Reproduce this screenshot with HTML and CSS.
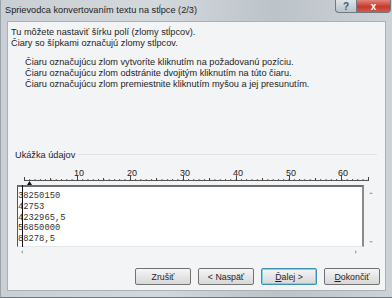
FILE: index.html
```html
<!DOCTYPE html>
<html lang="sk">
<head>
    <meta charset="UTF-8">
    <title>Sprievodca konvertovaním textu na stĺpce</title>
    <link rel="stylesheet" href="styles.css">
</head>
<body>
    <div class="window">
        <!-- Title bar -->
        <div class="titlebar">
            <span class="title">Sprievodca konvertovaním textu na stĺpce (2/3)</span>
            <div class="caption-btns">
                <span class="cap-help">?</span>
                <span class="cap-close">x</span>
            </div>
        </div>

        <!-- Dialog body -->
        <div class="client">
            <div class="intro">
                <p>Tu môžete nastaviť šírku polí (zlomy stĺpcov).</p>
                <p>Čiary so šípkami označujú zlomy stĺpcov.</p>
            </div>
            <div class="hints">
                <p>Čiaru označujúcu zlom vytvoríte kliknutím na požadovanú pozíciu.</p>
                <p>Čiaru označujúcu zlom odstránite dvojitým kliknutím na túto čiaru.</p>
                <p>Čiaru označujúcu zlom premiestnite kliknutím myšou a jej presunutím.</p>
            </div>

            <div class="group-head">
                <span>Ukážka údajov</span>
                <div class="group-line"></div>
            </div>

            <div class="preview">
                <svg class="ruler" width="360" height="20" viewBox="0 0 360 20">
                    <defs>
                        <pattern id="minor" x="11" y="0" width="5.29" height="20" patternUnits="userSpaceOnUse">
                            <rect x="0" y="14" width="1" height="1" fill="#555"/>
                        </pattern>
                    </defs>
                    <rect x="11" y="0" width="345" height="20" fill="url(#minor)"/>
                    <line x1="11" y1="15.5" x2="356" y2="15.5" stroke="#555" stroke-width="1"/>
                    <g stroke="#444" stroke-width="1">
                        <line x1="11.5" y1="12" x2="11.5" y2="16"/>
                        <line x1="37.5" y1="13" x2="37.5" y2="16"/>
                        <line x1="64.5" y1="11" x2="64.5" y2="16"/>
                        <line x1="90.5" y1="13" x2="90.5" y2="16"/>
                        <line x1="117.5" y1="11" x2="117.5" y2="16"/>
                        <line x1="143.5" y1="13" x2="143.5" y2="16"/>
                        <line x1="170.5" y1="11" x2="170.5" y2="16"/>
                        <line x1="196.5" y1="13" x2="196.5" y2="16"/>
                        <line x1="223.5" y1="11" x2="223.5" y2="16"/>
                        <line x1="249.5" y1="13" x2="249.5" y2="16"/>
                        <line x1="276.5" y1="11" x2="276.5" y2="16"/>
                        <line x1="302.5" y1="13" x2="302.5" y2="16"/>
                        <line x1="328.5" y1="11" x2="328.5" y2="16"/>
                        <line x1="355.5" y1="12" x2="355.5" y2="16"/>
                    </g>
                    <g class="ruler-num" text-anchor="middle">
                        <text x="66" y="11">10</text>
                        <text x="119" y="11">20</text>
                        <text x="172" y="11">30</text>
                        <text x="225" y="11">40</text>
                        <text x="278" y="11">50</text>
                        <text x="330" y="11">60</text>
                    </g>
                    <path d="M16.5 16 L14 20 L19 20 Z" fill="#111"/>
                </svg>

                <div class="data-row">
                    <div class="data">
                        <div class="break-line"></div>
                        <div>38250150</div>
                        <div>42753</div>
                        <div>4232965,5</div>
                        <div>56850000</div>
                        <div>88278,5</div>
                    </div>
                    <div class="vscroll">
                        <span class="arr arr-up"></span>
                        <span class="arr arr-down"></span>
                    </div>
                </div>
                <div class="hscroll">
                    <span class="arr arr-left"></span>
                    <span class="arr arr-right"></span>
                </div>
            </div>

            <div class="buttons">
                <button type="button">Zrušiť</button>
                <button type="button">&lt; Naspäť</button>
                <button type="button" class="default"><u>Ď</u>alej &gt;</button>
                <button type="button"><u>D</u>okončiť</button>
            </div>
        </div>
    </div>
</body>
</html>
```

FILE: styles.css
```css
/* Global */
body {
    margin: 0;
    padding: 0;
    font-family: 'Liberation Sans', Arial, sans-serif;
    background-color: #b9c0c6;
}

p {
    margin: 0;
}

/* Window frame */
.window {
    width: 392px;
    height: 298px;
    box-sizing: border-box;
    padding: 0 6px 6px 6px;
    background: linear-gradient(90deg, #c9cfd4, #d3d8dc 40%, #bcc3c9 70%, #cdd2d6);
    border-left: 1px solid #9aa3aa;
    border-bottom: 1px solid #6f787f;
    display: flex;
    flex-direction: column;
}

.titlebar {
    height: 21px;
    display: flex;
    align-items: flex-start;
    justify-content: space-between;
}

.title {
    margin-top: 5px;
    margin-left: -2px;
    font-size: 9.2px;
    color: #1c1c1c;
}

.caption-btns {
    display: flex;
    margin-right: -6px;
}

.cap-help,
.cap-close {
    height: 13px;
    display: flex;
    align-items: center;
    justify-content: center;
    font-size: 10px;
    font-weight: bold;
    border: 1px solid #6f7980;
    border-top: none;
    box-sizing: border-box;
}

.cap-help {
    width: 22px;
    color: #3d5a78;
    background: linear-gradient(#dfe4e8, #b9c2ca);
    border-radius: 0 0 0 4px;
}

.cap-close {
    width: 34px;
    color: #fff;
    background: linear-gradient(#e2857c, #c8392d 55%, #d25a4d);
    border-left: none;
    border-radius: 0 0 4px 0;
    margin-right: 1px;
}

/* Client area */
.client {
    flex: 1;
    background-color: #f2f4f5;
    border: 1px solid #a9b1b7;
    padding: 5px 5px 0 3px;
    display: flex;
    flex-direction: column;
    font-size: 9.2px;
    color: #1e1e1e;
}

.intro p,
.hints p {
    line-height: 11px;
}

.hints {
    margin-top: 8px;
    padding-left: 14px;
}

.group-head {
    margin-top: 60px;
    display: flex;
    align-items: center;
    gap: 3px;
    padding-left: 4px;
    line-height: 11px;
}

.group-line {
    flex: 1;
    height: 1px;
    margin-top: -3px;
    background-color: #dde2e5;
    margin-right: 3px;
}

/* Preview box */
.preview {
    margin-top: 4px;
}

.ruler {
    display: block;
    margin-left: 2px;
}

.ruler-num text {
    font-family: 'Liberation Sans', Arial, sans-serif;
    font-size: 9px;
    fill: #222;
}

.data-row {
    display: flex;
}

.data {
    position: relative;
    width: 344px;
    height: 55px;
    margin-left: 6px;
    background-color: #fff;
    border-top: 2px solid #6e6e6e;
    border-left: 1px solid #555;
    border-right: 2px solid #8a8a8a;
    border-bottom: 1px solid #e4e6e7;
    font-family: 'Liberation Mono', 'Courier New', monospace;
    font-size: 8.8px;
    line-height: 10.8px;
    color: #333;
    padding-top: 4px;
}

.break-line {
    position: absolute;
    left: 4px;
    top: -2px;
    bottom: -1px;
    width: 1px;
    background-color: #111;
}

.vscroll {
    width: 13px;
    display: flex;
    flex-direction: column;
    justify-content: space-between;
    align-items: center;
    padding: 7px 0 4px;
}

.hscroll {
    width: 344px;
    height: 10px;
    margin-left: 6px;
    display: flex;
    justify-content: space-between;
    align-items: center;
    padding: 0 4px;
    box-sizing: border-box;
}

.arr {
    width: 0;
    height: 0;
    border: 2px solid transparent;
}

.arr-up {
    border-bottom-color: #a8adb0;
    border-top-width: 0;
}

.arr-down {
    border-top-color: #a8adb0;
    border-bottom-width: 0;
}

.arr-left {
    border-right-color: #a8adb0;
    border-left-width: 0;
}

.arr-right {
    border-left-color: #a8adb0;
    border-right-width: 0;
}

/* Buttons */
.buttons {
    margin-top: auto;
    margin-bottom: 5px;
    display: flex;
    justify-content: flex-end;
    gap: 7px;
}

button {
    width: 56px;
    height: 17px;
    padding: 0;
    font-family: 'Liberation Sans', Arial, sans-serif;
    font-size: 8.8px;
    color: #1e1e1e;
    background: linear-gradient(#f6f6f6, #e6e6e6 50%, #d8d8d8);
    border: 1px solid #727272;
    border-radius: 2px;
}

button u {
    text-decoration: underline;
}

button.default {
    border-color: #3c8fb5;
    box-shadow: inset 0 0 0 1px #7fd0e8;
}
```
